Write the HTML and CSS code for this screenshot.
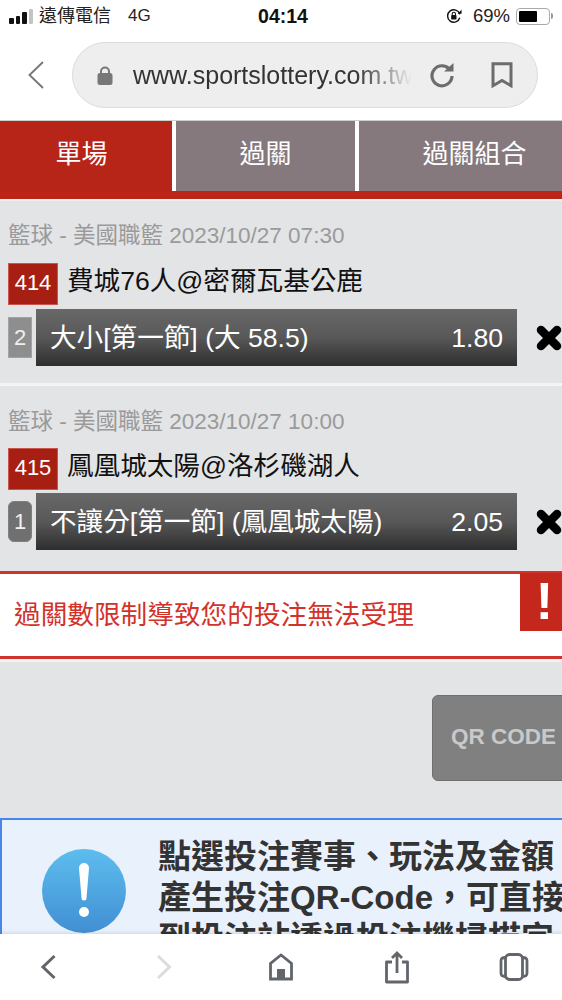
FILE: index.html
```html
<!DOCTYPE html>
<html lang="zh-Hant">
  <head>
    <meta charset="UTF-8" />
    <meta name="viewport" content="width=device-width, initial-scale=1.0" />
    <title>運彩投注</title>
    <link rel="stylesheet" href="styles.css">
  </head>
  <body>
    <div class="status-bar">
      <div class="status-left">
        <span class="signal"><i class="s1"></i><i class="s2"></i><i class="s3"></i><i class="s4"></i></span>
        <span class="carrier">遠傳電信</span>
        <span class="net">4G</span>
      </div>
      <div class="status-time">04:14</div>
      <div class="status-right">
        <svg class="rotate-lock" viewBox="0 0 18 18" width="16" height="16">
          <path d="M15.500 11A7 7 0 1 1 15.500 7" fill="none" stroke="#111" stroke-width="1.600"/>
          <path d="M13 6.500h4.500V2z" fill="#111"/>
          <rect x="5.800" y="8" width="6" height="5" rx="1" fill="#111"/>
          <path d="M7 8V6.500a1.800 1.800 0 0 1 3.600 0V8" fill="none" stroke="#111" stroke-width="1.200"/>
        </svg>
        <span class="batt-text">69%</span>
        <span class="battery"><span class="battery-level"></span></span>
        <span class="battery-tip"></span>
      </div>
    </div>

    <div class="url-row">
      <svg class="url-back" viewBox="0 0 16 28" width="16" height="28">
        <path d="M15 1L1.500 14 15 27" fill="none" stroke="#77777a" stroke-width="1.900"/>
      </svg>
      <div class="url-pill">
        <svg class="url-lock" viewBox="0 0 16 19" width="16" height="19">
          <path d="M4 8V5.500a4 4 0 0 1 8 0V8" fill="none" stroke="#77777a" stroke-width="2"/>
          <rect x="0.500" y="7" width="15" height="12" rx="2.500" fill="#77777a"/>
        </svg>
        <span class="url-text">www.sportslottery.com.tw</span>
        <svg class="url-reload" viewBox="0 0 26 26" width="26" height="26">
          <path d="M21.500 8.500A10 10 0 1 0 23 14" fill="none" stroke="#6c6c6e" stroke-width="3.200"/>
          <path d="M15 9.500h9.500V1z" fill="#6c6c6e"/>
        </svg>
        <svg class="url-mark" viewBox="0 0 22 26" width="22" height="26">
          <path d="M2 1.700h18v22L11 18.500l-9 5.200z" fill="none" stroke="#6c6c6e" stroke-width="3"/>
        </svg>
      </div>
    </div>

    <div class="tabs">
      <div class="tab tab-active">單場</div>
      <div class="tab tab-mid">過關</div>
      <div class="tab tab-last">過關組合</div>
    </div>
    <div class="tab-strip"></div>

    <section class="ticket">
      <div class="ticket-meta">籃球 - 美國職籃 2023/10/27 07:30</div>
      <div class="ticket-match">
        <span class="match-no">414</span>
        <span class="match-name">費城76人@密爾瓦基公鹿</span>
      </div>
      <div class="ticket-pick">
        <span class="pick-tag">2</span>
        <div class="pick-bar">
          <span>大小[第一節] (大 58.5)</span>
          <span>1.80</span>
        </div>
        <svg class="pick-close" viewBox="0 0 26 26" width="26" height="26">
          <path d="M5 5l16 16M21 5L5 21" stroke="#000" stroke-width="8.500" stroke-linecap="round"/>
        </svg>
      </div>
    </section>

    <section class="ticket ticket-second">
      <div class="ticket-meta">籃球 - 美國職籃 2023/10/27 10:00</div>
      <div class="ticket-match">
        <span class="match-no">415</span>
        <span class="match-name">鳳凰城太陽@洛杉磯湖人</span>
      </div>
      <div class="ticket-pick">
        <span class="pick-tag pick-tag-round">1</span>
        <div class="pick-bar">
          <span>不讓分[第一節] (鳳凰城太陽)</span>
          <span>2.05</span>
        </div>
        <svg class="pick-close" viewBox="0 0 26 26" width="26" height="26">
          <path d="M5 5l16 16M21 5L5 21" stroke="#000" stroke-width="8.500" stroke-linecap="round"/>
        </svg>
      </div>
    </section>

    <div class="error-box">
      <span class="error-text">過關數限制導致您的投注無法受理</span>
      <span class="error-flag">!</span>
    </div>

    <div class="qr-area">
      <div class="qr-button">QR CODE</div>
    </div>

    <div class="info-box">
      <div class="info-icon">
        <svg viewBox="0 0 84 84" width="84" height="84">
          <defs>
            <linearGradient id="infoGrad" x1="0" y1="0" x2="0" y2="1">
              <stop offset="0" stop-color="#5dbdee"/>
              <stop offset="1" stop-color="#418fd3"/>
            </linearGradient>
          </defs>
          <circle cx="42" cy="42" r="42" fill="url(#infoGrad)"/>
          <path d="M37 19a5 5 0 0 1 10 0l-2.500 30a2.500 2.500 0 0 1-5 0z" fill="#fff"/>
          <circle cx="42" cy="63" r="5" fill="#fff"/>
        </svg>
      </div>
      <div class="info-text">
        <div>點選投注賽事、玩法及金額</div>
        <div>產生投注QR-Code，可直接</div>
        <div>到投注站透過投注機掃描完</div>
      </div>
    </div>

    <nav class="bottom-bar">
      <svg viewBox="0 0 30 34">
        <path d="M21.500 6L10 17l11.500 11" fill="none" stroke="#62666b" stroke-width="3"/>
      </svg>
      <svg viewBox="0 0 30 34">
        <path d="M9 6l11.500 11L9 28" fill="none" stroke="#dcdcde" stroke-width="3"/>
      </svg>
      <svg viewBox="0 0 30 34">
        <path d="M4.500 29V13.500L15 5l10.500 8.500V29z" fill="none" stroke="#62666b" stroke-width="2.800"/>
        <rect x="11" y="19" width="8" height="10" fill="#62666b"/>
      </svg>
      <svg viewBox="0 0 30 34">
        <path d="M10 12H4.500v20h21V12H20" fill="none" stroke="#62666b" stroke-width="2.800" stroke-linejoin="round"/>
        <path d="M15 23V3M10 8l5-5 5 5" fill="none" stroke="#62666b" stroke-width="2.800"/>
      </svg>
      <svg viewBox="0 0 30 34">
        <rect x="6.500" y="4.500" width="17" height="25" rx="4" fill="none" stroke="#62666b" stroke-width="2.800"/>
        <path d="M6.500 7.500C3 7.500 2 8.500 2 11v12c0 2.500 1 3.500 4.500 3.500M23.500 7.500c3.500 0 4.500 1 4.500 3.500v12c0 2.500-1 3.500-4.500 3.500" fill="none" stroke="#62666b" stroke-width="2.800"/>
      </svg>
    </nav>
  </body>
</html>
```

FILE: styles.css
```css
html,
body {
  margin: 0;
  height: 1000px;
  overflow: hidden;
}
body {
  width: 562px;
  background-color: #e3e4e6;
  font-family: 'Liberation Sans', 'Noto Sans CJK TC', sans-serif;
  color: #111;
}
svg {
  display: block;
  flex-shrink: 0;
}

/* status bar */
.status-bar {
  height: 34px;
  background-color: white;
  display: grid;
  grid-template-columns: 1fr auto 1fr;
  align-items: center;
  padding: 0 9px 2px 9px;
  box-sizing: border-box;
  line-height: 24px;
}
.status-left {
  display: flex;
  align-items: center;
  font-size: 18px;
  color: #222;
}
.signal {
  display: flex;
  align-items: flex-end;
  gap: 2px;
  height: 15px;
  margin-right: 6px;
}
.signal i {
  display: block;
  width: 4.500px;
  border-radius: 1px;
  background-color: #111;
}
.signal .s1 { height: 6px; }
.signal .s2 { height: 8px; }
.signal .s3 { height: 12px; }
.signal .s4 { height: 15px; background-color: #c4c4c4; }
.net {
  margin-left: 17px;
  font-size: 17px;
}
.status-time {
  font-size: 19.500px;
  font-weight: bold;
  padding-left: 4px;
}
.status-right {
  display: flex;
  align-items: center;
  justify-content: flex-end;
  font-size: 18.500px;
  color: #222;
}
.rotate-lock {
  margin-right: 11px;
}
.battery {
  width: 34px;
  height: 17px;
  margin-left: 6px;
  padding: 2px;
  border: 1.500px solid #aaa;
  border-radius: 4px;
  box-sizing: border-box;
  display: flex;
}
.battery-level {
  width: 66%;
  background-color: #000;
  border-radius: 1px;
}
.battery-tip {
  width: 2px;
  height: 6px;
  margin-left: 1px;
  background-color: #999;
  border-radius: 0 2px 2px 0;
}

/* address bar */
.url-row {
  height: 87px;
  padding: 8px 24px 0 28px;
  box-sizing: border-box;
  background-color: white;
  display: flex;
  align-items: flex-start;
  border-bottom: 1px solid #cfcfcf;
}
.url-back {
  margin-top: 19px;
  margin-right: 28px;
}
.url-pill {
  width: 466px;
  height: 66px;
  background-color: #eeeeef;
  border: 1px solid #dcdcdd;
  border-radius: 33px;
  box-sizing: border-box;
  display: flex;
  align-items: center;
  padding: 0 24px;
  flex-shrink: 0;
}
.url-text {
  width: 280px;
  margin-left: 20px;
  font-size: 25px;
  line-height: 32px;
  color: #333;
  white-space: nowrap;
  overflow: hidden;
  -webkit-mask-image: linear-gradient(to right, #000 80%, transparent 100%);
  mask-image: linear-gradient(to right, #000 80%, transparent 100%);
}
.url-reload {
  margin-left: 17px;
}
.url-mark {
  margin-left: 36px;
}

/* tabs */
.tabs {
  height: 70px;
  display: flex;
  gap: 4px;
  background-color: white;
}
.tab {
  display: flex;
  align-items: center;
  justify-content: center;
  color: white;
  font-size: 26px;
  line-height: 34px;
  padding-bottom: 4px;
  box-sizing: border-box;
  background-color: #85797e;
}
.tab-active {
  width: 172px;
  padding-right: 9px;
  background-color: #b62518;
}
.tab-mid {
  width: 179px;
}
.tab-last {
  flex-grow: 1;
  padding-left: 28px;
}
.tab-strip {
  height: 8px;
  background-color: #bb2619;
  border-bottom: 2px solid #f2f2f3;
}

/* ticket rows */
.ticket {
  height: 185px;
  padding: 22px 0 0 8px;
  box-sizing: border-box;
  border-bottom: 3px solid #f4f4f5;
}
.ticket-second {
  height: 184px;
  padding-top: 23px;
  border-bottom: 0;
}
.ticket-second .ticket-match {
  margin-top: 13px;
}
.ticket-second .ticket-pick {
  margin-top: 3px;
}
.ticket-meta {
  font-size: 22.500px;
  line-height: 26px;
  color: #9a9a9b;
}
.ticket-match {
  display: flex;
  align-items: center;
  margin-top: 14px;
}
.match-no {
  width: 50px;
  height: 42px;
  box-sizing: border-box;
  border: 1px solid #c9564c;
  background-color: #a71f13;
  color: white;
  font-size: 22px;
  text-align: center;
  line-height: 38px;
}
.match-name {
  margin-left: 9px;
  padding-bottom: 6px;
  font-size: 26.600px;
  line-height: 36px;
  color: #111;
}
.ticket-pick {
  display: flex;
  align-items: center;
  margin-top: 4px;
}
.pick-tag {
  width: 25px;
  height: 41px;
  box-sizing: border-box;
  border: 1px solid #a3a3a3;
  background-color: #8e8e8e;
  color: #f0f0f0;
  font-size: 22px;
  text-align: center;
  line-height: 39px;
}
.pick-tag-round {
  border-color: #808080;
  background-color: #707070;
  border-radius: 6px;
}
.pick-bar {
  width: 481px;
  height: 57px;
  flex-shrink: 0;
  margin-left: 4px;
  padding: 0 14px;
  box-sizing: border-box;
  display: flex;
  align-items: center;
  justify-content: space-between;
  color: white;
  font-size: 26.600px;
  line-height: 34px;
  background: linear-gradient(to bottom, #686868 0%, #585858 50%, #2e2e2e 100%);
}
.pick-close {
  margin-left: 19px;
}

/* error message */
.error-box {
  position: relative;
  height: 88px;
  margin-top: 1px;
  box-sizing: border-box;
  padding-left: 14px;
  display: flex;
  align-items: center;
  background-color: white;
  border-top: 3px solid #d0342a;
  border-bottom: 3px solid #d0342a;
}
.error-text {
  font-size: 26.670px;
  line-height: 36px;
  color: #d2322a;
}
.error-flag {
  position: absolute;
  top: -1px;
  right: 0;
  width: 42px;
  height: 58px;
  box-sizing: border-box;
  padding-left: 7px;
  background-color: #c4281c;
  color: white;
  font-size: 52px;
  font-weight: bold;
  text-align: center;
  line-height: 56px;
}

/* qr button */
.qr-area {
  height: 156px;
  box-sizing: border-box;
  padding: 33px 0 0 432px;
  border-top: 3px solid #f4f4f5;
  overflow: hidden;
}
.qr-button {
  width: 200px;
  height: 86px;
  box-sizing: border-box;
  padding-left: 18px;
  border: 1px solid #6f6f6f;
  border-radius: 6px;
  background-color: #808080;
  color: #c9c9c9;
  font-size: 22.500px;
  font-weight: bold;
  line-height: 82px;
  white-space: nowrap;
}

/* info box */
.info-box {
  margin-top: 3px;
  height: 200px;
  box-sizing: border-box;
  display: flex;
  padding: 16px 0 0 40px;
  background-color: #e9f1fd;
  border-top: 2px solid #4a86ea;
  border-left: 2px solid #4a86ea;
}
.info-icon {
  margin-top: 13px;
}
.info-text {
  margin-left: 32px;
  font-size: 33px;
  line-height: 41px;
  font-weight: bold;
  color: #333;
  white-space: nowrap;
}

/* bottom toolbar */
.bottom-bar {
  position: fixed;
  left: 0;
  right: 0;
  bottom: 0;
  height: 66px;
  background-color: white;
  box-shadow: 0 -1px 4px rgba(0, 0, 0, 0.12);
  display: flex;
  align-items: center;
  justify-content: space-between;
  padding: 0 33.500px 0 32.500px;
  box-sizing: border-box;
}
.bottom-bar svg {
  width: 30px;
  height: 34px;
}
```
